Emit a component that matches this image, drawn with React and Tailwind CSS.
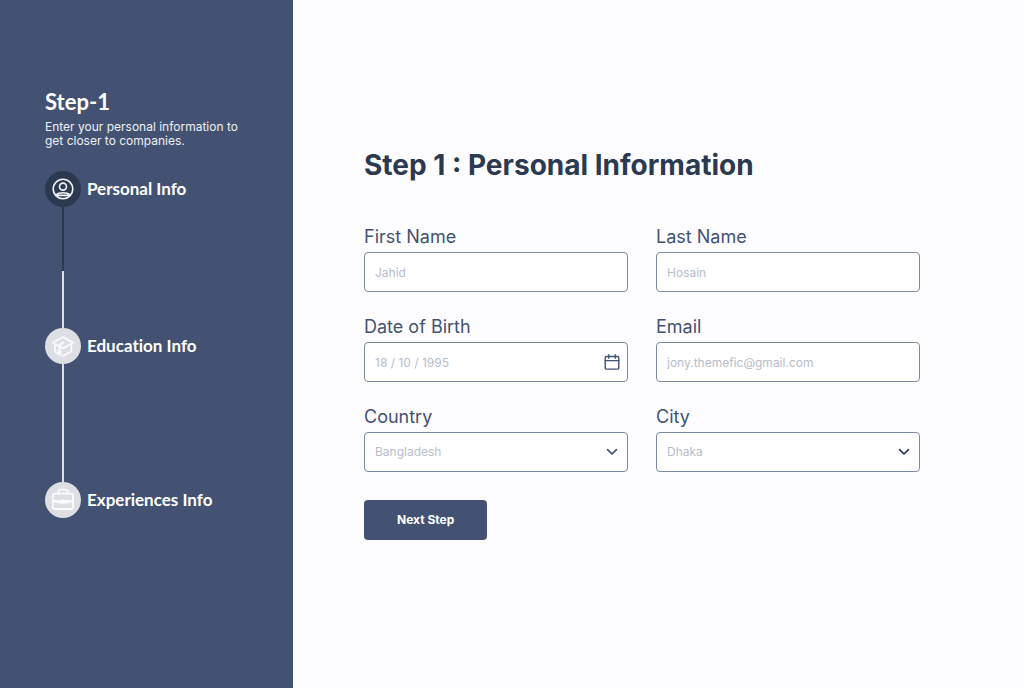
import React from "react";

function UserIcon() {
  return (
    <svg viewBox="0 0 24 24" className="size-6" fill="none" stroke="#f1f3f7" strokeWidth="1.6" aria-hidden="true">
      <circle cx="12" cy="12" r="9.8" />
      <circle cx="12" cy="9.6" r="3.5" />
      <path d="M4.6 17.8C8.6 15 15.4 15 19.4 17.8M5.2 18.4H18.8" />
    </svg>
  );
}

function EducationIcon() {
  return (
    <svg viewBox="0 0 24 24" className="size-6" fill="none" stroke="#fafbfc" strokeWidth="1.7" strokeLinecap="round" strokeLinejoin="round" aria-hidden="true">
      <path d="M1.8 8.6 12 3l10.2 5.6L12 14.4Z" />
      <path d="M4 10.4v7.4l2.4 1.4M20.4 10.2v7.4L12 21.8l-1-.5" />
      <path d="M12.6 8.8c-2.8.4-4.2 1.9-4.2 4.6v7.4" />
      <path d="M7.4 16.6 6.8 20.2h3.2l-.6-3.6" fill="#fafbfc" strokeWidth="1" />
    </svg>
  );
}

function BriefcaseIcon() {
  return (
    <svg viewBox="0 0 24 24" className="size-6" fill="none" stroke="#fafbfc" strokeWidth="1.8" strokeLinecap="round" strokeLinejoin="round" aria-hidden="true">
      <rect x="2" y="5.6" width="20" height="15.4" rx="2" />
      <path d="M7.4 5.4V3.4C7.4 2.2 8.1 1.6 9.2 1.6h5.6c1.100 0 1.800.6 1.800 1.800v2" />
      <path d="M2.4 12.8c3 1.300 6.200 2 9.600 2s6.600-.7 9.600-2ZM12 12v3" />
    </svg>
  );
}

function CalendarIcon() {
  return (
    <svg viewBox="0 0 16 16" className="size-4" fill="none" stroke="#435272" strokeWidth="1.4" strokeLinecap="round" strokeLinejoin="round" aria-hidden="true">
      <rect x="1.2" y="2.5" width="13.6" height="12.6" rx="1.2" />
      <path d="M1.2 6.6h13.6M4.8.8v3.4M11.2.8v3.4" />
    </svg>
  );
}

function Chevron({ dark }) {
  return (
    <svg viewBox="0 0 12 12" className="pointer-events-none absolute right-2.5 top-3.5 size-3" fill="none" stroke={dark ? "#2b3951" : "#435272"} strokeWidth="1.7" strokeLinecap="round" strokeLinejoin="round" aria-hidden="true">
      <path d="M1.6 3.6 6 8l4.4-4.4" />
    </svg>
  );
}

const boxClass =
  "block h-10 w-full rounded-[4px] border border-[#7c89a3] bg-white px-2.5 text-xs text-[#b7bdca] placeholder:text-[#b7bdca] placeholder:opacity-100";

function Field({ id, label, children }) {
  return (
    <div>
      <label htmlFor={id} className="block text-lg leading-[30px] text-[#435272]">
        {label}
      </label>
      <div className="relative">{children}</div>
    </div>
  );
}

function Step({ icon, title, active, children }) {
  return (
    <li>
      <div className="flex items-center gap-1.5">
        <span className={`flex size-9 shrink-0 items-center justify-center rounded-full ${active ? "bg-[#2b3951]" : "bg-[#dddfe5]"}`}>
          {icon}
        </span>
        <span className="font-['Lato',sans-serif] text-[17px] font-bold text-white [font-variant-ligatures:none]">{title}</span>
      </div>
      {children}
    </li>
  );
}

export default function App() {
  return (
    <div className="flex min-h-screen bg-[#fdfdff] font-['Inter',sans-serif]">
      <aside className="w-[293px] shrink-0 bg-[#435272] pl-[45px] pr-10 pt-[86px]">
        <h2 className="font-['Lato',sans-serif] text-[22px] font-bold leading-8 text-white">Step-1</h2>
        <p className="mt-0.5 text-xs leading-[14px] text-[#eef0f5]">
          Enter your personal information to get closer to companies.
        </p>
        <ol className="mt-[23px]">
          <Step icon={<UserIcon />} title="Personal Info" active>
            <div className="w-9">
              <div className="mx-auto h-16 w-0.5 bg-[#2b3951]" />
              <div className="mx-auto h-[57px] w-0.5 bg-[#dddfe5]" />
            </div>
          </Step>
          <Step icon={<EducationIcon />} title="Education Info">
            <div className="w-9">
              <div className="mx-auto h-[118px] w-0.5 bg-[#dddfe5]" />
            </div>
          </Step>
          <Step icon={<BriefcaseIcon />} title="Experiences Info" />
        </ol>
      </aside>

      <main className="flex-1 pl-[71px] pr-8 pt-[147px]">
        <form className="max-w-[556px]" onSubmit={(e) => e.preventDefault()}>
          <h1 className="text-[28px] font-bold leading-9 text-[#2b3951]">Step 1 : Personal Information</h1>
          <div className="mt-[39px] grid grid-cols-2 gap-x-7 gap-y-5">
            <Field id="first" label="First Name">
              <input id="first" type="text" placeholder="Jahid" className={boxClass} />
            </Field>
            <Field id="last" label="Last Name">
              <input id="last" type="text" placeholder="Hosain" className={boxClass} />
            </Field>
            <Field id="birth" label="Date of Birth">
              <input id="birth" type="text" placeholder="18 / 10 / 1995" className={boxClass} />
              <button type="button" aria-label="Open calendar" className="absolute right-2 top-3">
                <CalendarIcon />
              </button>
            </Field>
            <Field id="email" label="Email">
              <input id="email" type="email" placeholder="jony.themefic@gmail.com" className={boxClass} />
            </Field>
            <Field id="country" label="Country">
              <select id="country" className={`${boxClass} appearance-none`}>
                <option>Bangladesh</option>
              </select>
              <Chevron />
            </Field>
            <Field id="city" label="City">
              <select id="city" className={`${boxClass} appearance-none`}>
                <option>Dhaka</option>
              </select>
              <Chevron dark />
            </Field>
          </div>
          <button type="submit" className="mt-7 h-10 rounded-[4px] bg-[#435272] px-[33px] text-xs font-bold text-white">
            Next Step
          </button>
        </form>
      </main>
    </div>
  );
}
